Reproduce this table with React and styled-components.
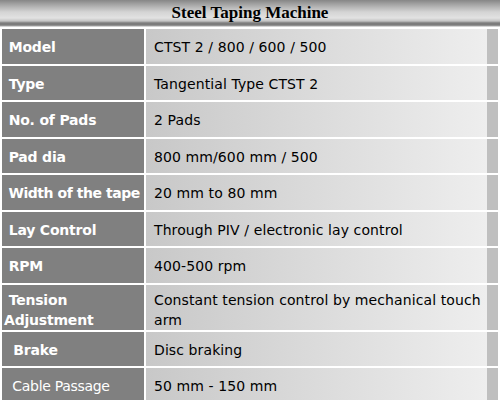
import styled, { createGlobalStyle } from "styled-components";

const GlobalStyle = createGlobalStyle`
  html, body {
    margin: 0;
    background: #ffffff;
  }
`;

const specs = [
  { label: "Model", value: "CTST 2 / 800 / 600 / 500" },
  { label: "Type", value: "Tangential Type CTST 2" },
  { label: "No. of Pads", value: "2 Pads" },
  { label: "Pad dia", value: "800 mm/600 mm / 500" },
  { label: "Width of the tape", value: "20 mm to 80 mm", tight: true },
  { label: "Lay Control", value: "Through PIV / electronic lay control" },
  { label: "RPM", value: "400-500 rpm" },
  { label: "\u00a0Tension Adjustment", value: "Constant tension control by mechanical touch arm", tall: true },
  { label: "\u00a0Brake", value: "Disc braking", h: 34 },
  { label: "\u00a0Cable Passage", value: "50 mm - 150 mm", light: true },
];

function App() {
  return (
    <Page>
      <GlobalStyle />
      <TitleBar>Steel Taping Machine</TitleBar>
      <SpecTable>
        <tbody>
          {specs.map((row) => (
            <Row key={row.label} $tall={row.tall} $h={row.h}>
              <Label $tall={row.tall} $light={row.light} $tight={row.tight}>
                {row.label}
              </Label>
              <Value $tall={row.tall}>{row.value}</Value>
            </Row>
          ))}
        </tbody>
      </SpecTable>
    </Page>
  );
}

export default App;

const Page = styled.div`
  width: 500px;
  height: 400px;
  overflow: hidden;
  background: #ffffff;
`;

const TitleBar = styled.div`
  height: 27px;
  line-height: 26px;
  text-align: center;
  font-family: "Liberation Serif", "Times New Roman", serif;
  font-weight: bold;
  font-size: 17px;
  color: #000000;
  background: linear-gradient(
    to bottom,
    #868686 0px,
    #a8a8a8 5px,
    #d4d4d4 12px,
    #e2e2e2 18px,
    #c4c4c4 21px,
    #7c7c7c 23px,
    #7c7c7c 25px,
    #a8a8a8 26px,
    #ffffff 27px
  );
`;

const SpecTable = styled.table`
  width: 500px;
  border-collapse: separate;
  border-spacing: 2px;
  margin-top: 0;
  table-layout: fixed;
`;

const Row = styled.tr`
  height: ${(p) => (p.$tall ? "43px" : p.$h ? `${p.$h}px` : "34.5px")};
`;

const Label = styled.td`
  width: 142px;
  padding: ${(p) => (p.$tall ? "5px 0 0 2px" : "2px 0 0 2px")};
  box-sizing: border-box;
  background: #808080;
  color: #ffffff;
  font-family: "DejaVu Sans", Verdana, sans-serif;
  font-size: 14px;
  font-weight: ${(p) => (p.$light ? "normal" : "bold")};
  letter-spacing: ${(p) => (p.$light ? "-0.3px" : p.$tight ? "-0.45px" : "-0.2px")};
  line-height: 20px;
  vertical-align: middle;
  white-space: ${(p) => (p.$tall ? "normal" : "pre")};
  &::before {
    content: "${(p) => (p.$tall ? "" : "\\00a0")}";
  }
`;

const Value = styled.td`
  padding: ${(p) => (p.$tall ? "5px 4px 0 8px" : "2px 4px 0 8px")};
  box-sizing: border-box;
  background-color: #bfbfbf;
  background-image: linear-gradient(to right, #c8c8c8, #eeeeee);
  background-size: 341px 100%;
  background-repeat: no-repeat;
  color: #000000;
  font-family: "DejaVu Sans", Verdana, sans-serif;
  font-size: 14px;
  letter-spacing: 0.1px;
  line-height: 20px;
  vertical-align: middle;
`;
